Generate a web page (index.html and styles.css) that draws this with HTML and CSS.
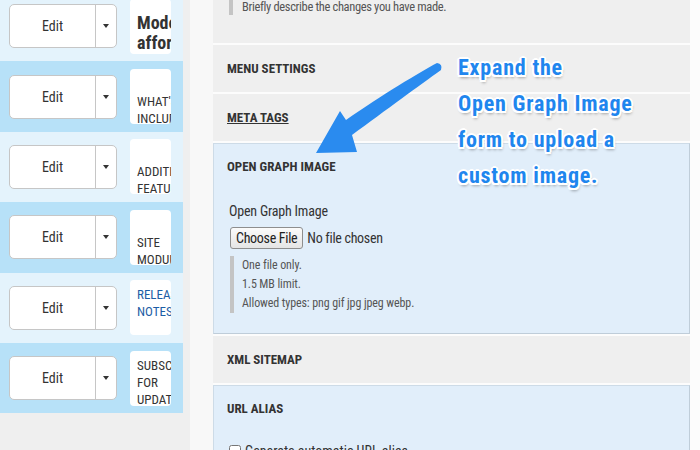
FILE: index.html
```html
<!DOCTYPE html>
<html lang="en">

<head>
    <meta charset="UTF-8">
    <meta name="viewport" content="width=device-width, initial-scale=1.0">
    <title>Edit page</title>
    <link rel="stylesheet" href="styles.css">
</head>

<body>
    <div class="page">
        <div class="content-list">
            <div class="list-row">
                <div class="split-button">
                    <span class="split-main">Edit</span>
                    <span class="split-toggle"><span class="caret"></span></span>
                </div>
                <div class="row-title row-title-heading">Modern affordable websites</div>
            </div>
            <div class="list-row list-row-alt">
                <div class="split-button">
                    <span class="split-main">Edit</span>
                    <span class="split-toggle"><span class="caret"></span></span>
                </div>
                <div class="row-title row-title-low">WHAT'S INCLUDED</div>
            </div>
            <div class="list-row">
                <div class="split-button">
                    <span class="split-main">Edit</span>
                    <span class="split-toggle"><span class="caret"></span></span>
                </div>
                <div class="row-title row-title-low">ADDITIONAL FEATURES</div>
            </div>
            <div class="list-row list-row-alt">
                <div class="split-button">
                    <span class="split-main">Edit</span>
                    <span class="split-toggle"><span class="caret"></span></span>
                </div>
                <div class="row-title row-title-low">SITE MODULES</div>
            </div>
            <div class="list-row">
                <div class="split-button">
                    <span class="split-main">Edit</span>
                    <span class="split-toggle"><span class="caret"></span></span>
                </div>
                <div class="row-title"><a class="row-link" href="#">RELEASE NOTES</a></div>
            </div>
            <div class="list-row list-row-alt">
                <div class="split-button">
                    <span class="split-main">Edit</span>
                    <span class="split-toggle"><span class="caret"></span></span>
                </div>
                <div class="row-title">SUBSCRIBE FOR UPDATES</div>
            </div>
        </div>

        <div class="edit-form">
            <div class="form-section revision">
                <div class="description">Briefly describe the changes you have made.</div>
            </div>
            <div class="form-section">
                <h3 class="section-title">Menu settings</h3>
            </div>
            <div class="form-section">
                <h3 class="section-title"><a class="section-link" href="#">Meta tags</a></h3>
            </div>
            <div class="form-section form-section-open">
                <h3 class="section-title">Open Graph Image</h3>
                <div class="section-body">
                    <label class="field-label" for="og-image">Open Graph Image</label>
                    <input class="file-input" type="file" id="og-image">
                    <div class="description description-file">
                        One file only.<br>
                        1.5 MB limit.<br>
                        Allowed types: png gif jpg jpeg webp.
                    </div>
                </div>
            </div>
            <div class="form-section">
                <h3 class="section-title">XML sitemap</h3>
            </div>
            <div class="form-section form-section-open">
                <h3 class="section-title">URL alias</h3>
                <div class="section-body section-body-tight">
                    <label class="check-label"><input type="checkbox" class="check"> Generate automatic URL alias</label>
                </div>
            </div>
        </div>
    </div>

    <!-- annotation laid over the form -->
    <svg class="callout-arrow" width="700" height="450" viewBox="0 0 700 450">
        <path d="M437 63 C420 72 382 95 346 120 L340 111 L316 153 L357 152 L352 135 C386 110 420 85 441 70 Q443 64 437 63 Z" fill="#2a8bef" />
    </svg>
    <div class="callout">
        Expand the<br>
        Open Graph Image<br>
        form to upload a<br>
        custom image.
    </div>
</body>

</html>
```

FILE: styles.css
```css
body {
    font-family: Roboto, "Liberation Sans", Arial, sans-serif;
    font-stretch: 75%;
    margin: 0;
    padding: 0;
    background-color: #f8f8f8;
    color: #333;
    overflow: hidden;
    position: relative;
    height: 450px;
}

.page {
    display: flex;
    align-items: flex-start;
}

/* left column: content overview */
.content-list {
    width: 190px;
    height: 470px;
    margin-top: -9px;
    background-color: #efefef;
    flex-shrink: 0;
}

.list-row {
    width: 183px;
    height: 70.4px;
    box-sizing: border-box;
    display: flex;
    align-items: center;
    padding-left: 9px;
    background-color: #e4f3fc;
}

.list-row-alt {
    background-color: #b7e1f8;
}

.split-button {
    display: flex;
    width: 108px;
    height: 44px;
    box-sizing: border-box;
    border: 1px solid #c6c6c6;
    border-radius: 5px;
    background-color: #fff;
    font-size: 14px;
    color: #333;
}

.split-main {
    flex: 1;
    display: flex;
    align-items: center;
    justify-content: center;
}

.split-toggle {
    width: 20px;
    border-left: 1px solid #c6c6c6;
    display: flex;
    align-items: center;
    justify-content: center;
}

.caret {
    width: 0;
    height: 0;
    border-top: 4px solid #333;
    border-left: 3px solid transparent;
    border-right: 3px solid transparent;
}

.row-title {
    width: 41px;
    height: 55px;
    box-sizing: border-box;
    margin-left: 13px;
    padding: 6px 0 0 7px;
    background-color: #fff;
    border-radius: 4px;
    overflow: hidden;
    font-size: 13px;
    line-height: 17px;
    color: #333;
}

.row-title-low {
    padding-top: 24px;
}

.row-title-heading {
    padding-top: 14px;
    font-size: 18px;
    font-weight: bold;
    line-height: 20px;
}

.row-link {
    color: #1d5ea6;
    text-decoration: none;
}

/* right column: node edit form */
.edit-form {
    margin-left: 23px;
    margin-top: -10px;
    width: 487px;
    background-color: #fcfcfc;
}

.form-section {
    width: 477px;
    box-sizing: border-box;
    background-color: #efefef;
    margin-bottom: 2px;
}

.revision {
    padding: 8px 0 28px 16px;
}

.section-title {
    margin: 0;
    padding: 15px 14px;
    font-size: 13px;
    line-height: 17px;
    font-weight: bold;
    text-transform: uppercase;
    color: #333;
}

.section-link {
    color: #333;
}

.form-section-open {
    background-color: #e1eefa;
    border: 1px solid #cddbe7;
    border-right-color: #bfcdd9;
    border-bottom-color: #bfcdd9;
}

.form-section-open .section-title {
    padding: 14px 13px 15px;
}

.section-body {
    padding: 12px 15px 20px;
}

.section-body-tight {
    padding-top: 10px;
}

.field-label {
    display: block;
    font-size: 14px;
    line-height: 18px;
    letter-spacing: -0.2px;
    color: #333;
}

.file-input {
    display: block;
    margin: 7px 0 0 1px;
    height: 22px;
    font-family: inherit;
    font-stretch: inherit;
    font-size: 14px;
    letter-spacing: -0.3px;
    color: #333;
}

.file-input::file-selector-button {
    font-family: inherit;
    font-stretch: inherit;
    font-size: 14px;
    letter-spacing: -0.3px;
    height: 22px;
    padding: 0 5px;
    margin-right: 4px;
    border: 1px solid #8e8e8e;
    border-radius: 3px;
    background: linear-gradient(#fbfbfb, #e5e5e5);
    color: #222;
}

.description {
    border-left: 4px solid #c4c4c4;
    padding-left: 9px;
    font-size: 12.5px;
    line-height: 17px;
    letter-spacing: -0.35px;
    color: #555;
}

.description-file {
    margin: 7px 0 0 1px;
    padding-left: 8px;
    font-size: 12px;
    line-height: 19px;
    letter-spacing: -0.1px;
}

.check-label {
    display: flex;
    align-items: center;
    font-size: 14px;
    line-height: 18px;
    color: #333;
}

.check {
    width: 12px;
    height: 12px;
    margin: 0 4px 0 0;
}

/* annotation */
.callout-arrow {
    position: absolute;
    left: 0;
    top: 0;
    pointer-events: none;
}

.callout {
    position: absolute;
    left: 458px;
    top: 50px;
    font-size: 22px;
    font-weight: bold;
    line-height: 36px;
    letter-spacing: 0.8px;
    color: #1f86ee;
    white-space: nowrap;
    text-shadow:
        -1.5px -1.5px 0 #fff,
        1.5px -1.5px 0 #fff,
        -1.5px 1.5px 0 #fff,
        1.5px 1.5px 0 #fff,
        0 -2px 0 #fff,
        0 2px 0 #fff,
        -2px 0 0 #fff,
        2px 0 0 #fff,
        1px 3px 3px rgba(0, 0, 0, 0.35);
}
```
